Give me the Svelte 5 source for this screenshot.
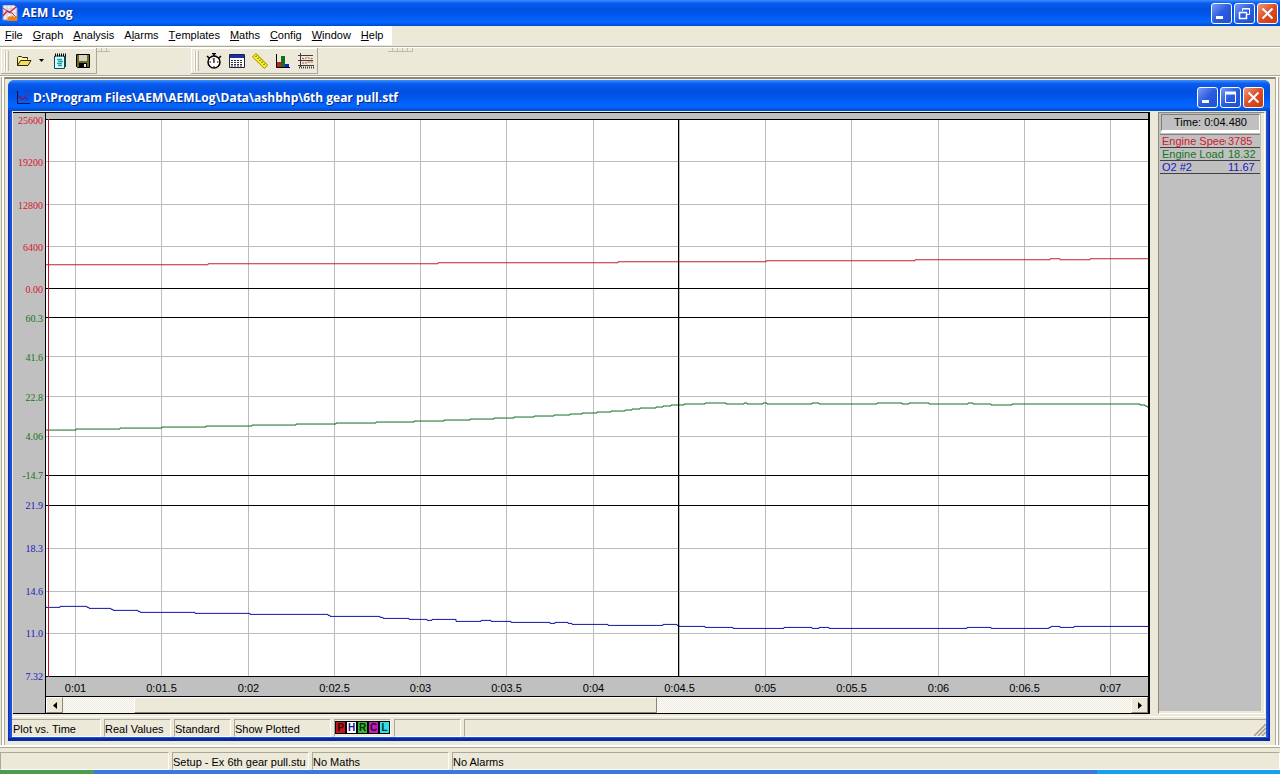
<script>
  const menus = [
    { key: "F", rest: "ile" },
    { key: "G", rest: "raph" },
    { key: "A", rest: "nalysis" },
    { pre: "A", key: "l", rest: "arms" },
    { key: "T", rest: "emplates" },
    { key: "M", rest: "aths" },
    { key: "C", rest: "onfig" },
    { key: "W", rest: "indow" },
    { key: "H", rest: "elp" },
  ];

  // plot units: one unit is one pixel at the default window size
  const PLOT_W = 1102;
  const PLOT_H = 557;

  // steps are [x, y] pairs: the trace holds y from x until the next pair
  const channels = [
    {
      name: "Engine Speed",
      value: "3785",
      color: "#d8142c",
      line: "#c0202c",
      top: 0,
      bottom: 169,
      labels: ["25600", "19200", "12800", "6400", "0.00"],
      steps: [[0, 145], [162, 144], [392, 143], [572, 142], [720, 141], [869, 140], [1004, 139], [1014, 140], [1044, 139]],
    },
    {
      name: "Engine Load",
      value: "18.32",
      color: "#107818",
      line: "#107020",
      top: 198,
      bottom: 355,
      labels: ["60.3", "41.6", "22.8", "4.06", "-14.7"],
      steps: [
        [0, 310], [30, 309], [74, 308], [116, 307], [160, 306], [206, 305], [250, 304], [290, 303], [330, 302],
        [368, 301], [398, 300], [424, 299], [448, 298], [468, 297], [488, 296], [508, 295], [524, 294], [536, 293],
        [551, 292], [565, 291], [579, 290], [586, 289], [594, 288], [610, 287], [617, 286], [625, 285], [638, 284],
        [659, 283], [680, 284], [698, 283], [701, 284], [717, 283], [721, 284], [766, 283], [773, 284], [831, 283],
        [856, 284], [863, 283], [883, 284], [922, 283], [927, 284], [945, 285], [966, 284], [1094, 285], [1099, 286], [1101, 287],
      ],
    },
    {
      name: "O2 #2",
      value: "11.67",
      color: "#1818c0",
      line: "#1414a0",
      top: 385,
      bottom: 556,
      labels: ["21.9", "18.3", "14.6", "11.0", "7.32"],
      steps: [
        [0, 487], [14, 486], [41, 487], [43, 488], [65, 489], [67, 490], [92, 491], [94, 492], [149, 493], [204, 494],
        [282, 495], [284, 496], [334, 497], [337, 498], [363, 499], [381, 500], [386, 499], [410, 501], [435, 500],
        [445, 501], [465, 502], [504, 503], [509, 502], [522, 503], [526, 504], [562, 505], [617, 504], [631, 505],
        [633, 506], [659, 507], [687, 508], [738, 507], [766, 508], [773, 507], [783, 508], [921, 507], [945, 508],
        [1003, 507], [1005, 506], [1014, 507], [1028, 506],
      ],
    },
  ];

  function tracePath(steps) {
    const [first, ...others] = steps;
    return `M0 ${first[1] + 0.5}` + others.map(([x, y]) => `H${x}V${y + 0.5}`).join("") + `H${PLOT_W}`;
  }

  const times = ["0:01", "0:01.5", "0:02", "0:02.5", "0:03", "0:03.5", "0:04", "0:04.5", "0:05", "0:05.5", "0:06", "0:06.5", "0:07"];
  const timeTicks = times.map((label, i) => ({ label, x: 29.5 + Math.round(i * 86.25) }));

  const yTicks = channels.flatMap((c) =>
    c.labels.map((label, i) => ({
      label,
      color: c.color,
      edge: i === 0 || i === c.labels.length - 1,
      y: Math.round(c.top + ((c.bottom - c.top) * i) / (c.labels.length - 1)) + 0.5,
    }))
  );

  const px = (x) => `${(x / PLOT_W) * 100}%`;
  const py = (y) => `${(y / PLOT_H) * 100}%`;

  const cursor = 632.5;
  let scroll = $state(13);

  const flags = [
    { letter: "P", bg: "#c01820", fg: "#300000" },
    { letter: "H", bg: "#ffffff", fg: "#1010a0" },
    { letter: "R", bg: "#38b838", fg: "#002800" },
    { letter: "C", bg: "#c020b8", fg: "#300030" },
    { letter: "L", bg: "#30e0e8", fg: "#003038" },
  ];
</script>

{#snippet caption(big)}
  <div class="caption-buttons">
    <button class="cap" aria-label="Minimize">
      <svg viewBox="0 0 21 21"><rect x="5" y="13" width="7" height="3" fill="#fff" /></svg>
    </button>
    <button class="cap" aria-label={big ? "Restore" : "Maximize"}>
      <svg viewBox="0 0 21 21" fill="none" stroke="#fff">
        {#if big}
          <path d="M8.500 8V5.500h7v6H13M8 6h8" />
          <path d="M5.500 9v6.500h7V9M5 9.500h8" stroke-width="1.500" />
        {:else}
          <path d="M5.500 5v10.500h10V5" />
          <path d="M5 6h11" stroke-width="3" />
        {/if}
      </svg>
    </button>
    <button class="cap close" aria-label="Close">
      <svg viewBox="0 0 21 21"><path d="M5.500 5.500l10 10M15.500 5.500l-10 10" stroke="#fff" stroke-width="2" /></svg>
    </button>
  </div>
{/snippet}

<div class="app">
  <header class="titlebar">
    <svg class="app-icon" viewBox="0 0 16 16">
      <path d="M1 0h11l3 3v12H1z" fill="#f4ecf4" stroke="#9a90b0" />
      <path d="M1 4h13M1 8h13M5 1v13M9 1v13" stroke="#c8c0e0" />
      <path d="M1 11l4-5 3 1 6-5" stroke="#d03030" fill="none" stroke-width="1.500" />
      <path d="M1 3l5 4 4 1 4 4" stroke="#a04050" fill="none" />
      <path d="M5 16l1-4 2-1 1 1 2-2 1 2 3-1v5z" fill="#f08010" />
    </svg>
    <h1>AEM Log</h1>
    {@render caption(true)}
  </header>

  <nav class="menubar">
    <div class="menus">
      {#each menus as m}
        <button>{m.pre ?? ""}<u>{m.key}</u>{m.rest}</button>
      {/each}
    </div>
  </nav>

  <div class="toolbars">
    <div class="toolbar files">
      <span class="grip"></span>
      <button class="tool" aria-label="Open">
        <svg viewBox="0 0 16 16">
          <path d="M1.500 12.500v-8l1-1h3l1 1h5v2" fill="#fff8a0" stroke="#302800" />
          <path d="M1.500 12.500l3-5h10.500l-3 5z" fill="#f0e060" stroke="#302800" />
        </svg>
      </button>
      <button class="drop" aria-label="Recent files"><svg viewBox="0 0 5 3"><path d="M0 0h5L2.500 3z" /></svg></button>
      <button class="tool" aria-label="Notes">
        <svg viewBox="0 0 16 16">
          <path d="M2.500 3h10v12.500h-10z" fill="#d8ffff" stroke="#104850" />
          <path d="M13.500 2v12" stroke="#104850" />
          <path d="M3 2h11" stroke="#000" stroke-width="3" stroke-dasharray="1 1" />
          <path d="M5 6.500h5M6 8.500h5M5 10.500h5M6 12.500h4" stroke="#18a8b0" stroke-width="1.500" />
        </svg>
      </button>
      <button class="tool" aria-label="Save">
        <svg viewBox="0 0 16 16">
          <path d="M1.500 1.500h13v13h-12l-1-1z" fill="#6c6c20" stroke="#000" />
          <path d="M4 2h8v6H4z" fill="#d8d4c4" />
          <path d="M4 10h8v4H4z" fill="#000" />
          <path d="M9 11h2v3H9z" fill="#e8e8e8" />
        </svg>
      </button>
    </div>
    <span class="remnant"></span>
    <div class="toolbar views">
      <span class="grip"></span>
      <button class="tool" aria-label="Time">
        <svg viewBox="0 0 16 16" fill="none" stroke="#000">
          <circle cx="8" cy="9" r="6" fill="#fff" stroke-width="1.500" />
          <path d="M6 .500h4M8 1v2M1 3l2 2M15 3l-2 2" stroke-width="1.500" />
          <path d="M8 5v5M8 13v1M3.500 9H5M11 9h1.500" />
          <path d="M7 5l1 4" stroke="#a02020" />
        </svg>
      </button>
      <button class="tool" aria-label="Table">
        <svg viewBox="0 0 16 16">
          <path d="M.500 1.500h15v13H.500z" fill="#fff" stroke="#202040" />
          <path d="M1 2h14v3H1z" fill="#1830b0" />
          <path d="M2 7.500h12M2 9.500h12M2 11.500h12M2 13h12" stroke="#303040" stroke-dasharray="2 1" />
        </svg>
      </button>
      <button class="tool" aria-label="Measure">
        <svg viewBox="0 0 16 16">
          <path d="M4 .500L.500 4l12 11.500 3-3.500z" fill="#f8f020" stroke="#a09000" />
          <path d="M5 2.500L3.500 4M7 4.500L5.500 6M9 6.500L7.500 8M11 8.500L9.500 10M13 10.500L11.500 12" stroke="#504800" />
        </svg>
      </button>
      <button class="tool" aria-label="Histogram">
        <svg viewBox="0 0 16 16">
          <path d="M1.500 1v13.500H15" fill="none" stroke="#000" />
          <path d="M2 9h4v5H2z" fill="#c02020" />
          <path d="M6 3h4v11H6z" fill="#107020" />
          <path d="M10 11h4v3h-4z" fill="#1020d0" />
        </svg>
      </button>
      <button class="tool" aria-label="Strip chart">
        <svg viewBox="0 0 16 16" fill="none" stroke="#404040">
          <path d="M2.500 0v14M0 2.500h15M0 7.500h15M0 12.500h16" />
          <path d="M4 5.500h3l2-1 3 1h3M4 10h4l2-1h5" stroke="#b05050" stroke-dasharray="2 1" />
          <path d="M1 14.500h15" stroke-dasharray="1 1" stroke-width="2" />
        </svg>
      </button>
    </div>
    <span class="remnant wide"></span>
  </div>

  <main class="mdi">
    <section class="child">
      <header class="child-title">
        <svg class="child-icon" viewBox="0 0 14 14" fill="none">
          <path d="M1.500 0v12.500H14" stroke="#081448" />
          <path d="M2 10l3-5 3 4 5-7" stroke="#a02058" />
          <path d="M2 4l4 5 3-3 3 3" stroke="#30209c" />
        </svg>
        <h2>D:\Program Files\AEM\AEMLog\Data\ashbhp\6th gear pull.stf</h2>
        {@render caption(false)}
      </header>

      <div class="workspace">
        <div class="chart">
          <svg class="value-axis">
            {#each yTicks as t}
              <text x="29" y={py(t.y)} dy="4" text-anchor="end" fill={t.color}>{t.label}</text>
            {/each}
          </svg>
          <div class="plot">
            <svg class="canvas" role="img" aria-label="Channels against time">
              {#each timeTicks as t}
                <line x1={px(t.x)} x2={px(t.x)} y1="0" y2="100%" stroke="#bcbcbc" />
              {/each}
              {#each yTicks as t}
                <line x1="0" x2="100%" y1={py(t.y)} y2={py(t.y)} stroke={t.edge ? "#000" : "#bcbcbc"} />
              {/each}
              <svg width="100%" height="100%" viewBox="0 0 {PLOT_W} {PLOT_H}" preserveAspectRatio="none">
                {#each channels as c}
                  <path class="trace" d={tracePath(c.steps)} stroke={c.line} />
                {/each}
              </svg>
              <line x1="2.5" x2="2.5" y1="0" y2="100%" stroke="#c0182c" />
              <line x1={px(cursor)} x2={px(cursor)} y1="0" y2="100%" stroke="#000" />
            </svg>
          </div>
          <svg class="time-axis">
            {#each timeTicks as t}
              <text x={px(t.x)} y="15" text-anchor="middle">{t.label}</text>
            {/each}
          </svg>
          <div class="scrollbar">
            <button aria-label="Scroll left"><svg viewBox="0 0 4 7"><path d="M4 0v7L0 3.500z" /></svg></button>
            <input type="range" min="0" max="100" bind:value={scroll} aria-label="Time position" />
            <button aria-label="Scroll right"><svg viewBox="0 0 4 7"><path d="M0 0v7l4-3.500z" /></svg></button>
          </div>
        </div>

        <aside class="readout">
          <div class="time">Time: 0:04.480</div>
          <table>
            <tbody>
              {#each channels as c}
                <tr style="color: {c.color}">
                  <th scope="row">{c.name}</th>
                  <td>{c.value}</td>
                </tr>
              {/each}
            </tbody>
          </table>
        </aside>
      </div>

      <footer class="status inner">
        <span>Plot vs. Time</span>
        <span>Real Values</span>
        <span>Standard</span>
        <span>Show Plotted</span>
        <span class="flags">
          {#each flags as f}
            <b style="background: {f.bg}; color: {f.fg}">{f.letter}</b>
          {/each}
        </span>
        <span></span>
        <span class="last">
          <svg class="size-grip" viewBox="0 0 12 12"><path d="M0 12L12 0M4 12l8-8M8 12l4-4" stroke="#a09c88" stroke-width="1.500" /></svg>
        </span>
      </footer>
    </section>
  </main>

  <footer class="status outer">
    <span></span>
    <span>Setup - Ex 6th gear pull.stu</span>
    <span>No Maths</span>
    <span>No Alarms</span>
  </footer>
  <div class="taskbar"><i class="start"></i><i class="tasks"></i><i class="tray"></i></div>
</div>

<style>
  :global(body) {
    margin: 0;
  }
  .app {
    display: flex;
    flex-direction: column;
    height: 100vh;
    overflow: hidden;
    background: #ece9d8;
    color: #000;
    font-family: "Liberation Sans", Arial, sans-serif;
    font-size: 11px;
    line-height: 13px;
  }
  button {
    display: flex;
    flex: none;
    align-items: center;
    justify-content: center;
    margin: 0;
    padding: 0;
    border: 0;
    background: none;
    color: inherit;
    font: inherit;
  }
  svg {
    display: block;
  }

  /* Title bars */
  .titlebar,
  .child-title {
    display: flex;
    align-items: center;
    flex: none;
    box-sizing: border-box;
    background: linear-gradient(#3c90ff 0, #0a5cf0 12%, #0050e0 35%, #0058f0 60%, #0468ff 85%, #0048d0 100%);
    color: #fff;
  }
  .titlebar {
    height: 26px;
    padding: 0 2px;
    gap: 4px;
  }
  .child-title {
    height: 31px;
    padding: 4px 6px 0 8px;
    gap: 3px;
    border-radius: 6px 6px 0 0;
  }
  h1,
  h2 {
    flex: 1;
    margin: 0;
    font-family: "Open Sans", "Noto Sans", sans-serif;
    font-size: 12px;
    font-weight: 700;
    line-height: 16px;
    white-space: nowrap;
    text-shadow: 1px 1px #0a2a80;
  }
  .app-icon {
    width: 16px;
    height: 16px;
  }
  .child-icon {
    width: 14px;
    height: 14px;
  }
  .caption-buttons {
    display: flex;
    gap: 2px;
  }
  .cap {
    box-sizing: border-box;
    width: 21px;
    height: 21px;
    border: 1px solid #fff;
    border-radius: 3px;
    background: linear-gradient(135deg, #7a9cf0, #2a5ce0 50%, #2050d0);
  }
  .cap.close {
    background: linear-gradient(135deg, #f09878, #dc4c24 50%, #c83c10);
  }
  .cap svg {
    flex: none;
    width: 21px;
    height: 21px;
  }

  /* Menu */
  .menubar {
    display: flex;
    flex: none;
    height: 20px;
  }
  .menus {
    display: flex;
    align-items: center;
    gap: 10px;
    height: 19px;
    padding: 0 8px 0 5px;
    background: #fff;
  }

  /* Toolbars */
  .toolbars {
    display: flex;
    flex: none;
    box-sizing: border-box;
    height: 30px;
    padding: 0 1px;
    border-top: 1px solid #aca899;
    border-bottom: 1px solid #aca899;
    box-shadow: inset 0 1px #fff, 0 1px #fff;
  }
  .toolbar {
    display: flex;
    align-items: center;
    box-sizing: border-box;
    height: 26px;
    margin-top: 1px;
    padding-left: 4px;
    border: 1px solid #aca899;
    border-width: 0 1px 1px 0;
    box-shadow: inset 1px 1px #fff;
  }
  .files {
    width: 96px;
  }
  .views {
    width: 127px;
    margin-left: 81px;
  }
  .grip {
    flex: none;
    width: 2px;
    height: 20px;
    margin-right: 3px;
    border: 1px solid #c0bcac;
    border-width: 0 1px;
    box-shadow: -1px 0 #fff, inset 1px 0 #fff;
  }
  .tool {
    width: 23px;
    height: 22px;
  }
  .tool svg {
    width: 16px;
    height: 16px;
  }
  .drop {
    width: 13px;
    height: 22px;
  }
  .drop svg {
    width: 5px;
    height: 3px;
  }
  .remnant {
    width: 13px;
    height: 3px;
    margin-top: 1px;
    border-bottom: 1px solid #c0bcac;
    background: repeating-linear-gradient(90deg, transparent 0 4px, #c0bcac 4px 5px);
  }
  .remnant.wide {
    width: 25px;
    margin-left: 70px;
  }

  /* Document area */
  .mdi {
    display: flex;
    flex: 1;
    min-height: 0;
    margin: 1px 4px 0;
    padding: 1px 5px 4px 3px;
    border: 1px solid #aca899;
    border-top: 2px solid #8c8878;
    box-shadow: -2px 0 #fff, 2px 0 #fff, -3px 0 #aca899, 3px 0 #aca899;
  }
  .child {
    display: flex;
    flex: 1;
    flex-direction: column;
    min-width: 0;
    padding-bottom: 4px;
    border-radius: 7px 7px 0 0;
    background: linear-gradient(90deg, #0a2cb8, #1c54e0 3px, #1c54e0 calc(100% - 3px), #0a20a0);
    box-shadow: inset 0 -3px #0828a8;
  }
  .workspace {
    display: flex;
    flex: 1;
    min-height: 0;
    margin: 0 4px;
    padding: 1px 1px 2px;
    background: #ece9d8;
  }
  .chart {
    display: grid;
    grid-template-columns: 31px minmax(0, 1fr);
    grid-template-rows: 6px minmax(0, 1fr) 19px 17px;
    flex: 1;
    min-width: 0;
    padding-left: 1px;
    border: 1px solid #000;
    border-left: 0;
    border-right-width: 2px;
    background: #c0c0c0;
  }
  .value-axis {
    grid-column: 1;
    grid-row: 2;
    width: 100%;
    height: 100%;
    overflow: visible;
    font-family: "Liberation Serif", "Times New Roman", serif;
    font-size: 10px;
  }
  .plot {
    grid-column: 2;
    grid-row: 1 / 3;
    min-height: 0;
    padding-top: 6px;
    border-left: 1px solid #000;
  }
  .canvas {
    width: 100%;
    height: 100%;
    background: #fff;
    shape-rendering: crispEdges;
  }
  .trace {
    fill: none;
    shape-rendering: geometricPrecision;
    vector-effect: non-scaling-stroke;
  }
  .time-axis {
    grid-column: 2;
    grid-row: 3;
    width: 100%;
    height: 100%;
    box-sizing: border-box;
    border-left: 1px solid #000;
  }
  .scrollbar {
    display: flex;
    grid-column: 2;
    grid-row: 4;
    border-top: 1px solid #000;
    border-left: 1px solid #000;
    background: #f6f4ec;
  }
  .scrollbar button {
    box-sizing: border-box;
    width: 17px;
    height: 16px;
    border: 1px solid;
    border-color: #fff #8c8878 #8c8878 #fff;
    background: #ece9d8;
  }
  .scrollbar button svg {
    width: 4px;
    height: 7px;
  }
  .scrollbar input {
    flex: 1;
    min-width: 0;
    height: 16px;
    margin: 0;
    background: repeating-conic-gradient(#fff 0 25%, #ece9d8 0 50%) 0 0 / 2px 2px;
    appearance: none;
  }
  .scrollbar input::-webkit-slider-thumb {
    box-sizing: border-box;
    width: 49%;
    height: 16px;
    border: 1px solid;
    border-color: #fff #8c8878 #8c8878 #fff;
    background: #ece9d8;
    appearance: none;
  }

  /* Channel values at the cursor */
  .readout {
    display: flex;
    flex-direction: column;
    flex: none;
    box-sizing: border-box;
    width: 107px;
    margin-left: 8px;
    padding: 1px;
    border: 1px solid #8c8878;
    border-right-color: #fff;
    border-bottom-color: #fff;
    background: #c0c0c0;
    box-shadow: inset -3px -2px #ece9d8;
  }
  .time {
    margin: 0 3px 2px 1px;
    padding: 1px 0;
    border: 1px solid #808080;
    border-right-color: #fff;
    border-bottom-color: #fff;
    box-shadow: 0 2px #fff;
    text-align: center;
  }
  table {
    width: 100px;
    margin-top: 1px;
    border-collapse: collapse;
    border-top: 1px solid #808080;
    table-layout: fixed;
  }
  th,
  td {
    height: 12px;
    padding: 0 0 0 2px;
    border-bottom: 1px solid #404040;
    font-weight: 400;
    line-height: 12px;
    text-align: left;
    white-space: nowrap;
    overflow: hidden;
  }
  th {
    width: 64px;
  }

  /* Status bars */
  .status {
    display: grid;
    flex: none;
    column-gap: 3px;
    background: #ece9d8;
  }
  .status span {
    box-sizing: border-box;
    height: 18px;
    padding: 3px 0 0;
    border: 1px solid;
    border-color: #aca899 #fff #fff #aca899;
    line-height: 13px;
    white-space: nowrap;
    overflow: hidden;
  }
  .inner {
    grid-template-columns: 89px 67px 57px 97px 57px 67px 1fr;
    margin: 0 4px;
    padding-top: 2px;
    border-top: 1px solid #fff;
  }
  .inner span:first-child {
    padding-left: 1px;
    border-left: 0;
  }
  .status .flags {
    display: flex;
    padding: 1px 0 0;
  }
  .flags b {
    box-sizing: border-box;
    width: 11px;
    height: 13px;
    border: 1px solid #000;
    font-size: 10px;
    line-height: 11px;
    text-align: center;
  }
  .status .last {
    display: flex;
    align-items: flex-end;
    justify-content: flex-end;
    border-right: 0;
  }
  .size-grip {
    width: 12px;
    height: 12px;
  }
  .outer {
    grid-template-columns: 169px 137px 137px 1fr;
    margin-top: 1px;
    padding-top: 4px;
    border-top: 1px solid #aca899;
    box-shadow: 0 -2px #fff;
  }
  .taskbar {
    display: flex;
    flex: none;
    height: 4px;
  }
  .start {
    width: 94px;
    background: #4c9c50;
  }
  .tasks {
    flex: 1;
    background: #3878e0;
  }
  .tray {
    width: 183px;
    background: #18a0f0;
  }
</style>
